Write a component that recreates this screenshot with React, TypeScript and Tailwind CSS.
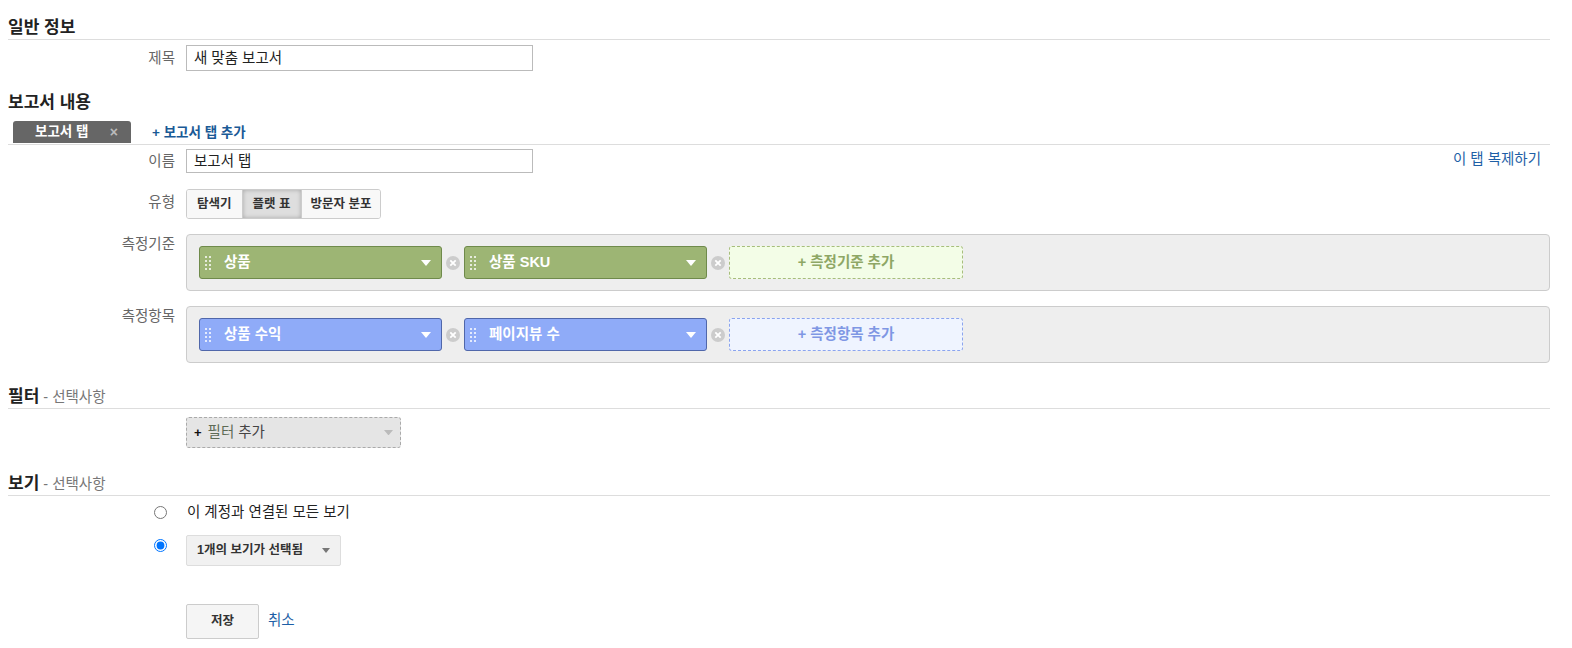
import React from "react";

function Handle() {
  return (
    <svg width="6" height="14" viewBox="0 0 6 14" className="shrink-0">
      {[0, 1, 2, 3].map((r) => (
        <g key={r}>
          <rect x="0" y={r * 4} width="2" height="2" fill="#ffffff" opacity="0.75" />
          <rect x="4" y={r * 4} width="2" height="2" fill="#ffffff" opacity="0.75" />
        </g>
      ))}
    </svg>
  );
}

function Caret({ color = "#ffffff", w = 10 }: { color?: string; w?: number }) {
  return (
    <svg width={w} height={w / 2 + 1} viewBox="0 0 10 6" className="shrink-0">
      <path d="M0 0 L10 0 L5 6 Z" fill={color} />
    </svg>
  );
}

function RemoveCircle() {
  return (
    <svg width="14" height="14" viewBox="0 0 14 14" className="shrink-0">
      <circle cx="7" cy="7" r="7" fill="#cccccc" />
      <path d="M4.3 4.3 L9.7 9.7 M9.7 4.3 L4.3 9.7" stroke="#ffffff" strokeWidth="1.8" />
    </svg>
  );
}

function Pill({ label, kind }: { label: string; kind: "dim" | "met" }) {
  const cls =
    kind === "dim"
      ? "bg-[#9db574] border-[#6f8a4b]"
      : "bg-[#8fabf8] border-[#5067aa]";
  return (
    <div className={`w-[243px] h-[33px] rounded-[3px] border ${cls} flex items-center pl-[5px] pr-[10px]`}>
      <Handle />
      <span className="ml-[13px] text-[14.5px] font-bold text-white leading-none flex-1">{label}</span>
      <Caret />
    </div>
  );
}

function AddBox({ label, kind }: { label: string; kind: "dim" | "met" }) {
  const cls =
    kind === "dim"
      ? "bg-[#f3fde7] border-[#a7bd7c] text-[#8ea765]"
      : "bg-[#eff4ff] border-[#8ba4ee] text-[#7f97e4]";
  return (
    <div className={`w-[234px] h-[33px] rounded-[3px] border border-dashed ${cls} flex items-center justify-center text-[14.5px] font-bold leading-none`}>
      + {label}
    </div>
  );
}

function Label({ children, pt = "pt-0" }: { children: React.ReactNode; pt?: string }) {
  return (
    <div className={`w-[167px] shrink-0 text-right text-[14.5px] text-[#666] leading-[20px] ${pt}`}>
      {children}
    </div>
  );
}

function SectionHead({ title, sub, className = "" }: { title: string; sub?: string; className?: string }) {
  return (
    <div className={`border-b border-[#dddddd] leading-[20px] h-[25px] pt-[3px] ${className}`}>
      <span className="text-[17px] font-bold text-[#222] leading-[20px]">{title}</span>
      {sub && <span className="text-[14.5px] text-[#777] leading-[20px]"> - {sub}</span>}
    </div>
  );
}

export default function App() {
  return (
    <div className="w-[1572px] h-[648px] bg-white font-['Liberation_Sans','Noto_Sans_CJK_KR',sans-serif] text-[#333] pl-[8px] pr-[22px] overflow-hidden leading-[20px]">
      <div className="pt-[15px]">
        <SectionHead title="일반 정보" />
      </div>

      <div className="flex items-center gap-[11px] mt-[5px]">
        <Label>제목</Label>
        <div className="w-[347px] h-[26px] border border-[#bbb] flex items-center px-[7px] text-[14.5px] text-[#222] leading-none">
          새 맞춤 보고서
        </div>
      </div>

      <div className="mt-[22px] h-[20px] text-[17px] font-bold text-[#222] leading-[20px]">보고서 내용</div>

      <div className="flex items-end border-b border-[#dddddd] pb-[1px] mt-[7px] h-[25px]">
        <div className="ml-[5px] w-[118px] h-[22px] bg-[#666666] rounded-t-[3px] flex items-center justify-between pl-[22px] pr-[13px]">
          <span className="text-[13.5px] font-bold text-white leading-none">보고서 탭</span>
          <span className="text-[14px] font-bold text-[#bbbbbb] leading-none">×</span>
        </div>
        <div className="ml-[21px] mb-[4px] text-[13.5px] font-bold text-[#1a5a96] leading-none">+ 보고서 탭 추가</div>
      </div>

      <div className="flex items-start gap-[11px] mt-[4px]">
        <Label pt="pt-[2px]">이름</Label>
        <div className="w-[347px] h-[24px] border border-[#bbb] flex items-center px-[7px] text-[14.5px] text-[#222] leading-none">
          보고서 탭
        </div>
        <div className="flex-1" />
        <div className="text-[14.5px] text-[#1e5fa6] leading-none mt-[3px] mr-[9px]">이 탭 복제하기</div>
      </div>

      <div className="flex items-start gap-[11px] mt-[16px]">
        <Label pt="pt-[3px]">유형</Label>
        <div className="flex h-[30px] border border-[#cccccc] rounded-[3px] overflow-hidden text-[12.5px] font-bold text-[#333] leading-none">
          <div className="px-[10px] flex items-center bg-[#f8f8f8]">탐색기</div>
          <div className="px-[10px] flex items-center bg-[#dedede] border-x border-[#cccccc] shadow-[inset_0_0_4px_rgba(0,0,0,0.25)]">플랫 표</div>
          <div className="px-[9px] flex items-center bg-[#f8f8f8]">방문자 분포</div>
        </div>
      </div>

      <div className="flex items-start gap-[11px] mt-[15px]">
        <Label>측정기준</Label>
        <div className="flex-1 h-[57px] bg-[#eeeeee] border border-[#cccccc] rounded-[4px] flex items-center pl-[12px]">
          <Pill label="상품" kind="dim" />
          <div className="w-[22px] flex justify-center"><RemoveCircle /></div>
          <Pill label="상품 SKU" kind="dim" />
          <div className="w-[22px] flex justify-center"><RemoveCircle /></div>
          <AddBox label="측정기준 추가" kind="dim" />
        </div>
      </div>

      <div className="flex items-start gap-[11px] mt-[15px]">
        <Label>측정항목</Label>
        <div className="flex-1 h-[57px] bg-[#eeeeee] border border-[#cccccc] rounded-[4px] flex items-center pl-[12px]">
          <Pill label="상품 수익" kind="met" />
          <div className="w-[22px] flex justify-center"><RemoveCircle /></div>
          <Pill label="페이지뷰 수" kind="met" />
          <div className="w-[22px] flex justify-center"><RemoveCircle /></div>
          <AddBox label="측정항목 추가" kind="met" />
        </div>
      </div>

      <div className="mt-[21px]">
        <SectionHead title="필터" sub="선택사항" />
      </div>

      <div className="flex items-start gap-[11px] mt-[8px]">
        <div className="w-[167px] shrink-0" />
        <div className="w-[215px] h-[31px] bg-[#e5e5e5] border border-dashed border-[#aaaaaa] rounded-[3px] flex items-center pl-[7px] pr-[7px] leading-none">
          <span className="text-[13px] font-bold text-[#111]">+</span>
          <span className="ml-[6px] text-[14.5px] text-[#5e6b55]">필터</span>
          <span className="ml-[4px] text-[14.5px] text-[#444] flex-1">추가</span>
          <Caret color="#bbbbbb" w={9} />
        </div>
      </div>

      <div className="mt-[23px]">
        <SectionHead title="보기" sub="선택사항" className="h-[24px]" />
      </div>

      <div className="flex items-center mt-[6px] h-[20px]">
        <div className="w-[146px] shrink-0" />
        <input type="radio" name="v" className="w-[13px] h-[13px] m-0" readOnly />
        <span className="ml-[20px] text-[14.5px] text-[#222] leading-none">이 계정과 연결된 모든 보기</span>
      </div>

      <div className="flex items-center mt-[13px]">
        <div className="w-[146px] shrink-0" />
        <input type="radio" name="v" defaultChecked className="w-[13px] h-[13px] m-0 mb-[10px] accent-[#0075ff]" />
        <div className="ml-[19px] w-[155px] h-[31px] bg-[#f1f1f1] border border-[#dddddd] rounded-[2px] flex items-center pl-[10px] pr-[10px]">
          <span className="text-[12.5px] font-bold text-[#333] leading-none flex-1">1개의 보기가 선택됨</span>
          <Caret color="#777777" w={8} />
        </div>
      </div>

      <div className="flex items-center mt-[38px]">
        <div className="w-[178px] shrink-0" />
        <div className="w-[73px] h-[35px] bg-[#f5f5f5] border border-[#cccccc] rounded-[2px] flex items-center justify-center text-[12.5px] font-bold text-[#333] leading-none">
          저장
        </div>
        <span className="ml-[9px] text-[14.5px] text-[#1e5fa6] leading-none mb-[3px]">취소</span>
      </div>
    </div>
  );
}
